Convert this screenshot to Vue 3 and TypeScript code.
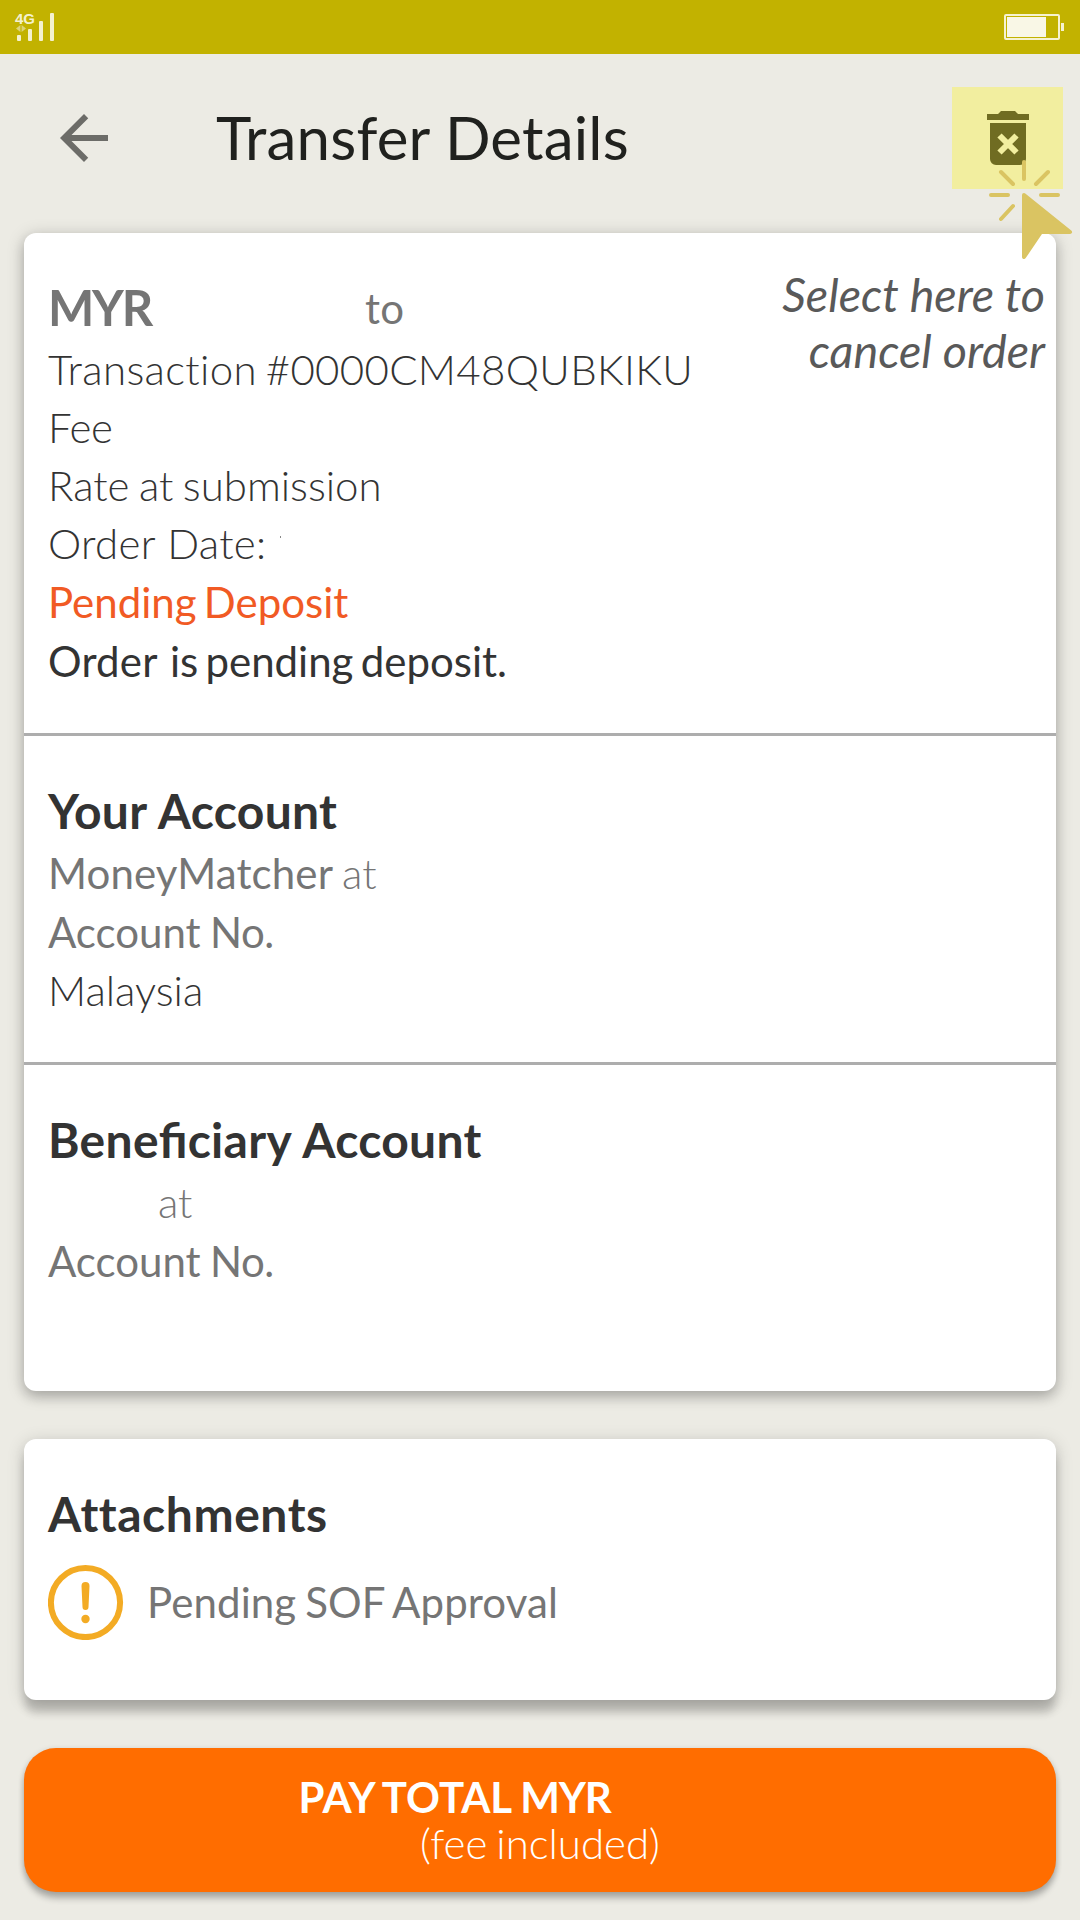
<script setup lang="ts">
interface Row {
  lead: string
  rest: string
  tone: string
  space: number
  tracking: number
}

const transferRows: Row[] = [
  { lead: 'Transaction', rest: ' #0000CM48QUBKIKU', tone: 'light', space: -3, tracking: 0.33 },
  { lead: 'Fee', rest: '', tone: 'light', space: 0, tracking: -0.4 },
  { lead: 'Rate', rest: ' at submission', tone: 'light', space: -2, tracking: 0 },
  { lead: 'Order', rest: ' Date:', tone: 'light dated', space: 0.5, tracking: 0.3 },
  { lead: 'Pending', rest: ' Deposit', tone: 'alert', space: -3.5, tracking: 0 },
  { lead: 'Order', rest: ' is pending deposit.', tone: 'strong', space: -3.5, tracking: 0 },
]

const signalBars: number[] = [6, 12, 20, 28]
</script>

<template>
  <div class="screen">
    <div class="status">
      <div class="signal">
        <span class="network">4G</span>
        <svg class="data" width="10" height="7" viewBox="0 0 10 7"><path d="M4.4 0v7L0 3.5zM5.6 0v7L10 3.5z" /></svg>
        <i v-for="h in signalBars" :key="h" class="bar" :style="{ height: h + 'px' }"></i>
      </div>
      <div class="battery">
        <div class="cell"><div class="charge"></div></div>
        <div class="nub"></div>
      </div>
    </div>

    <header class="header">
      <svg class="back" width="72" height="72" viewBox="0 0 24 24"><path d="M20 11H7.83l5.59-5.59L12 4l-8 8 8 8 1.41-1.41L7.83 13H20z" /></svg>
      <h1 class="title">Transfer Details</h1>
      <button class="cancel" aria-label="Cancel order">
        <svg width="111" height="102" viewBox="0 0 111 102">
          <path d="M35 27h11l3-3h14l3 3h11v6H35zM38 36h36v36a6 6 0 0 1-6 6H44a6 6 0 0 1-6-6z" />
          <path class="cross" d="M47.5 48.500l17 17M64.500 48.500l-17 17" />
        </svg>
      </button>
    </header>

    <main class="content">
      <section class="card">
        <div class="block transfer">
          <div class="amount"><b>MYR</b><span>to</span></div>
          <p
            v-for="row in transferRows"
            :key="row.lead + row.rest"
            class="row"
            :class="row.tone"
            :style="{ wordSpacing: row.space + 'px', letterSpacing: row.tracking + 'px' }"
          ><span class="lead">{{ row.lead }}</span>{{ row.rest }}</p>
          <div class="hint">Select here to<br />cancel order</div>
        </div>
        <div class="block account">
          <h2>Your Account</h2>
          <p class="row muted name">MoneyMatcher <span class="thin">at</span></p>
          <p class="row muted number">Account <span>No.</span></p>
          <p class="row light">Malaysia</p>
        </div>
        <div class="block account">
          <h2>Bene<span class="joined">fi</span>ciary Account</h2>
          <p class="row muted unnamed"><span class="thin">at</span></p>
          <p class="row muted number">Account <span>No.</span></p>
        </div>
      </section>

      <section class="card attachments">
        <h2>Attachments</h2>
        <div class="approval">
          <svg width="76" height="76" viewBox="0 0 76 76">
            <circle cx="37.500" cy="38.500" r="34.600" />
            <path d="M33.500 22a4 4 0 0 1 8 0l-1 21a3 3 0 0 1-6 0z" />
            <circle cx="37.500" cy="55" r="4.200" class="dot" />
          </svg>
          <span>Pending SOF Approval</span>
        </div>
      </section>

      <button class="pay">
        <span class="total">PAY TOTAL <span class="currency">MYR</span></span>
        <span class="fee">(fee included)</span>
      </button>
    </main>

    <svg class="pointer" width="90" height="106" viewBox="0 0 90 106">
      <path class="rays" d="M39 7v17M16 17l12 12M63 17L51 29M6 40h17M56 40h17M28 51L16 64" />
      <path class="arrow" d="M39 40L85 77H56L39 102z" />
    </svg>
  </div>
</template>

<style>
body {
  margin: 0;
  background: #ecebe4;
}
</style>

<style scoped>
.screen {
  position: relative;
  width: 1080px;
  height: 1920px;
  overflow: hidden;
  background: #ecebe4;
  color: #333;
  font-family: Lato, 'Liberation Sans', sans-serif;
}
.status {
  display: flex;
  justify-content: space-between;
  height: 54px;
  background: #c2b200;
}
.signal {
  position: relative;
  display: flex;
  align-items: flex-end;
  gap: 7px;
  height: 41px;
  margin-left: 17px;
}
.bar {
  width: 4px;
  border-radius: 1px;
  background: #f4f1cf;
}
.network {
  position: absolute;
  left: -2px;
  top: 10px;
  font: bold 15px/17px 'Liberation Sans', sans-serif;
  color: #f4f1cf;
}
.data {
  position: absolute;
  left: -1px;
  top: 25px;
  fill: #ddd479;
}
.battery {
  display: flex;
  align-items: center;
  gap: 1px;
  margin: 14px 16px 14px 0;
}
.cell {
  box-sizing: border-box;
  width: 56px;
  height: 26px;
  padding: 1px;
  border: 2px solid #f6f2d0;
  border-radius: 2px;
}
.charge {
  width: 39px;
  height: 20px;
  background: #f9f7e6;
}
.nub {
  width: 3px;
  height: 8px;
  background: #f6f2d0;
}
.header {
  display: flex;
  align-items: center;
  box-sizing: border-box;
  height: 179px;
  padding: 0 17px 11px 48px;
}
.back {
  fill: #6c6c68;
}
.title {
  margin: 0 0 2px 96px;
  font-size: 60px;
  line-height: 72px;
  font-weight: 400;
  letter-spacing: 0.2px;
  word-spacing: 0;
  color: #20211e;
}
.cancel {
  display: flex;
  width: 111px;
  height: 102px;
  margin-left: auto;
  padding: 0;
  border: 0;
  background: #f2ee9f;
}
.cancel path {
  fill: #706c22;
}
.cancel .cross {
  fill: none;
  stroke: #f2ee9f;
  stroke-width: 6;
}
.content {
  display: flex;
  flex-direction: column;
  gap: 48px;
  padding: 0 24px;
}
.card {
  border-radius: 12px;
  background: #fff;
  box-shadow: 0 6px 12px rgba(0, 0, 0, 0.16), 0 3px 18px rgba(0, 0, 0, 0.2);
}
.block {
  box-sizing: border-box;
  height: 329px;
  padding: 41px 24px 0;
}
.block + .block {
  border-top: 3px solid #adadad;
}
.transfer {
  position: relative;
  height: 500px;
  padding-top: 40px;
}
.amount {
  display: flex;
  height: 67px;
  line-height: 68px;
  color: #757575;
}
.amount b {
  width: 317px;
  font-size: 49px;
  letter-spacing: -2.2px;
}
.amount span {
  margin-top: 1px;
  font-size: 42px;
  letter-spacing: 0.3px;
}
.row {
  margin: 0;
  font-size: 42px;
  line-height: 58px;
  white-space: nowrap;
  font-variant-ligatures: none;
}
.light,
.thin {
  font-weight: 300;
}
.dated::after {
  content: '';
  display: inline-block;
  width: 1px;
  height: 2px;
  margin-left: 14px;
  background: #888;
  vertical-align: 21px;
}
.alert {
  color: #f15a24;
}
.alert,
.strong,
.number {
  margin-top: 1px;
}
.strong .lead {
  margin-right: 5px;
  letter-spacing: 0.2px;
}
.muted {
  color: #757575;
}
.name {
  letter-spacing: 0.15px;
  word-spacing: -1px;
}
.number {
  word-spacing: -1.5px;
}
.number span {
  letter-spacing: -0.4px;
}
.unnamed {
  padding-left: 110px;
}
h2 {
  height: 67px;
  margin: 0;
  font-size: 48px;
  line-height: 68px;
  font-weight: 700;
  letter-spacing: 0.3px;
  word-spacing: 1px;
  color: #333;
}
.joined {
  letter-spacing: 0;
}
.hint {
  position: absolute;
  top: 33px;
  right: 11px;
  font-size: 46.700px;
  line-height: 56px;
  font-style: italic;
  text-align: right;
  color: #595959;
}
.attachments {
  box-sizing: border-box;
  height: 261px;
  padding: 41px 24px 0;
  box-shadow: 0 6px 12px rgba(0, 0, 0, 0.08), 0 3px 18px rgba(0, 0, 0, 0.16), 0 14px 8px -1px rgba(0, 0, 0, 0.16);
}
.attachments h2 {
  letter-spacing: 0.55px;
}
.approval {
  display: flex;
  align-items: center;
  gap: 23px;
  margin-top: 17px;
  font-size: 42px;
  letter-spacing: 0.1px;
  word-spacing: -2px;
  color: #757575;
}
.approval svg {
  fill: #f3ab24;
}
.approval circle:first-child {
  fill: none;
  stroke: #f3ab24;
  stroke-width: 6;
}
.pay {
  display: flex;
  flex-direction: column;
  align-items: center;
  height: 144px;
  padding: 26px 0 0;
  border: 0;
  border-radius: 32px;
  background: #ff6d00;
  box-shadow: 0 7px 6px rgba(0, 0, 0, 0.2), 0 2px 6px rgba(0, 0, 0, 0.18);
  font: 400 42px/46px Lato, sans-serif;
  color: #fff;
}
.total {
  margin-right: 171px;
  font-weight: 700;
  word-spacing: -1px;
}
.currency {
  letter-spacing: -1.2px;
}
.fee {
  font-weight: 300;
  word-spacing: -2.5px;
}
.pointer {
  position: absolute;
  left: 985px;
  top: 155px;
}
.pointer path {
  stroke: #dac462;
  stroke-width: 4;
  stroke-linecap: round;
  stroke-linejoin: round;
}
.rays {
  fill: none;
}
.arrow {
  fill: #dac462;
}
</style>
